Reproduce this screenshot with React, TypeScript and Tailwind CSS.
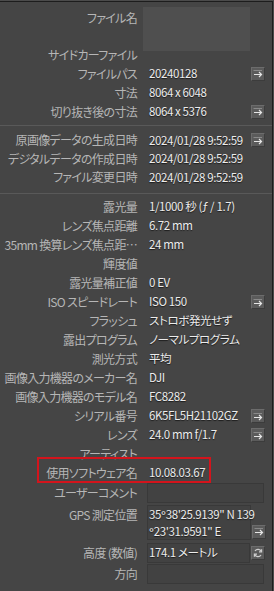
import React from 'react';

type Btn = 'arrow' | 'refresh' | null;

interface Row {
  label: string;
  value?: string;
  btn?: Btn;
}

const cjk = "font-['Noto_Sans_CJK_JP',sans-serif] [font-feature-settings:'palt']";

function ArrowBtn() {
  return (
    <span className="flex h-[14px] w-[14px] shrink-0 items-center justify-center border border-[#6c6c6c] border-b-[#3c3c3c] border-r-[#3c3c3c] bg-[#5b5b5b]">
      <svg width="10" height="9" viewBox="0 0 10 9" fill="none">
        <path d="M0.5 1.5H9" stroke="#8a8a8a" strokeWidth="1" />
        <path d="M1 5.5H8.5M6 3L8.5 5.5L6 8" stroke="#e6e6e6" strokeWidth="1.2" />
      </svg>
    </span>
  );
}

function RefreshBtn() {
  return (
    <span className="flex h-[14px] w-[14px] shrink-0 items-center justify-center border border-[#6c6c6c] border-b-[#3c3c3c] border-r-[#3c3c3c] bg-[#5b5b5b]">
      <svg width="10" height="10" viewBox="0 0 10 10" fill="none" stroke="#cfcfcf" strokeWidth="1.2">
        <path d="M8.3 3.6A3.5 3.5 0 0 0 2 3" />
        <path d="M8.6 1.2V3.8H6" />
        <path d="M1.7 6.4A3.5 3.5 0 0 0 8 7" />
        <path d="M1.4 8.8V6.2H4" />
      </svg>
    </span>
  );
}

function Label({ text, className = '' }: { text: string; className?: string }) {
  return (
    <span className={`w-[137px] shrink-0 whitespace-nowrap text-right text-[12px] tracking-[-0.7px] text-[#b6b6b6] ${className}`}>
      {text}
    </span>
  );
}

const valueCls = 'whitespace-nowrap text-[11.5px] tracking-[-0.4px] text-[#ececec] [text-shadow:0_1px_1px_rgba(0,0,0,0.6)]';

function InfoRow({ label, value, btn }: Row) {
  return (
    <div className="flex h-[19px] items-center pr-[7px]">
      <Label text={label} />
      <span className={`ml-[12px] flex-1 ${valueCls}`}>{value}</span>
      {btn === 'arrow' && <ArrowBtn />}
      {btn === 'refresh' && <RefreshBtn />}
    </div>
  );
}

function Separator({ top, bottom }: { top: string; bottom: string }) {
  return <div className={`h-px bg-[#595959] ${top} ${bottom}`} />;
}

// 度記号は CJK フォントだと全角になるので欧文フォントで
function Deg() {
  return <span className="font-['Noto_Sans',sans-serif] tracking-[-0.2px]">°</span>;
}

const fileRows: Row[] = [
  { label: 'ファイルパス', value: '20240128', btn: 'arrow' },
  { label: '寸法', value: '8064 x 6048' },
  { label: '切り抜き後の寸法', value: '8064 x 5376', btn: 'arrow' },
];

const dateRows: Row[] = [
  { label: '原画像データの生成日時', value: '2024/01/28 9:52:59', btn: 'arrow' },
  { label: 'デジタルデータの作成日時', value: '2024/01/28 9:52:59' },
  { label: 'ファイル変更日時', value: '2024/01/28 9:52:59' },
];

const exifRows: Row[] = [
  { label: '露光量', value: '1/1000 秒 (ƒ / 1.7)' },
  { label: 'レンズ焦点距離', value: '6.72 mm' },
  { label: '35mm 換算レンズ焦点距…', value: '24 mm' },
  { label: '輝度値' },
  { label: '露光量補正値', value: '0 EV' },
  { label: 'ISO スピードレート', value: 'ISO 150', btn: 'arrow' },
  { label: 'フラッシュ', value: 'ストロボ発光せず' },
  { label: '露出プログラム', value: 'ノーマルプログラム' },
  { label: '測光方式', value: '平均' },
  { label: '画像入力機器のメーカー名', value: 'DJI' },
  { label: '画像入力機器のモデル名', value: 'FC8282' },
  { label: 'シリアル番号', value: '6K5FL5H21102GZ', btn: 'arrow' },
  { label: 'レンズ', value: '24.0 mm f/1.7', btn: 'arrow' },
  { label: 'アーティスト' },
];

const boxCls = 'border border-[#393939] bg-[#424242]';

export default function App() {
  return (
    <div className={`h-[591px] w-[274px] bg-[#4b4b4b] pr-px pt-px ${cjk}`}>
      <div className="flex h-full flex-col border-r border-t border-[#1d1d1d] bg-[#454545]">
        {/* ファイル名 + サイドカー */}
        <div className="flex pt-[5px]">
          <div className="flex flex-col">
            <div className="mt-[1px] flex h-[19px] items-center"><Label text="ファイル名" /></div>
            <div className="mt-[18px] flex h-[19px] items-center"><Label text="サイドカーファイル" /></div>
          </div>
          <div className="ml-[6px] h-[44px] w-[107px] bg-[#4f4f4f]" />
        </div>

        {fileRows.map((r) => <InfoRow key={r.label} {...r} />)}
        <Separator top="mt-[4px]" bottom="mb-[5px]" />
        {dateRows.map((r) => (
          <div key={r.label} className="h-[18.5px] [&>div]:h-[18.5px]">
            <InfoRow {...r} />
          </div>
        ))}
        <Separator top="mt-[6px]" bottom="mb-[4px]" />
        {exifRows.map((r) => <InfoRow key={r.label} {...r} />)}

        {/* 使用ソフトウェア名 (赤枠) */}
        <div className="relative">
          <InfoRow label="使用ソフトウェア名" value="10.08.03.67" />
          <div className="pointer-events-none absolute left-[37px] top-[-7px] h-[26px] w-[174px] border-2 border-[#d3141c]" />
        </div>

        <div className="flex h-[20px] items-center pr-[8px]">
          <Label text="ユーザーコメント" />
          <div className={`ml-[10px] h-[20px] flex-1 ${boxCls}`} />
        </div>

        <div className="mt-[2px] flex items-start pr-[7px]">
          <Label text="GPS 測定位置" className="mt-[1px] leading-[17px]" />
          <div className={`ml-[10px] h-[35px] w-[104px] px-[1px] leading-[16.5px] ${boxCls} ${valueCls}`}>
            35<Deg />38'25.9139" N 139<br /><Deg />23'31.9591" E
          </div>
          <div className="ml-[1px] self-end pb-[1px]"><ArrowBtn /></div>
        </div>

        <div className="mt-[3px] flex items-center pr-[7px]">
          <Label text="高度 (数値)" />
          <div className={`ml-[10px] flex h-[20px] w-[104px] items-center px-[1px] ${boxCls} ${valueCls}`}>
            174.1 メートル
          </div>
          <div className="ml-[1px]"><RefreshBtn /></div>
        </div>

        <div className="mt-[1px] flex items-center pr-[8px]">
          <Label text="方向" />
          <div className={`ml-[10px] h-[20px] flex-1 ${boxCls}`} />
        </div>
      </div>
    </div>
  );
}
